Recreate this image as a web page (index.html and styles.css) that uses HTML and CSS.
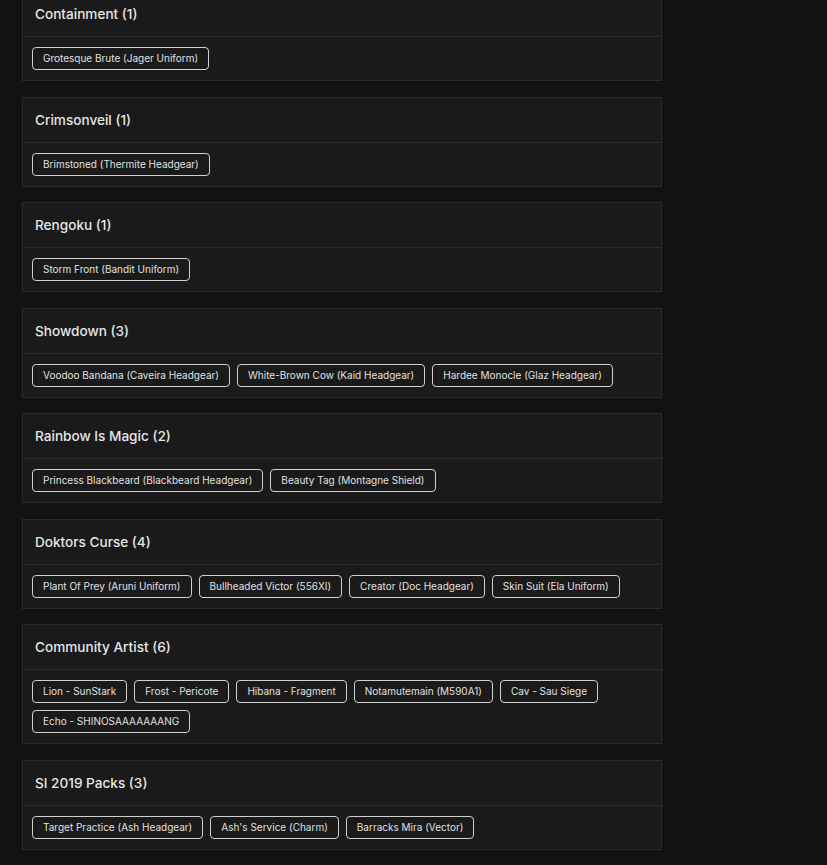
FILE: index.html
```html
<!DOCTYPE html>
<html lang="en">
<head>
  <meta charset="UTF-8">
  <title>Collections</title>
  <meta name="viewport" content="width=device-width, initial-scale=1.0">
  <link rel="stylesheet" href="styles.css">
</head>
<body>

  <main class="collections">

    <section class="pack">
      <h3 class="pack-title">Containment (1)</h3>
      <div class="pack-items">
        <span class="item">Grotesque Brute (Jager Uniform)</span>
      </div>
    </section>

    <section class="pack">
      <h3 class="pack-title">Crimsonveil (1)</h3>
      <div class="pack-items">
        <span class="item">Brimstoned (Thermite Headgear)</span>
      </div>
    </section>

    <section class="pack">
      <h3 class="pack-title">Rengoku (1)</h3>
      <div class="pack-items">
        <span class="item">Storm Front (Bandit Uniform)</span>
      </div>
    </section>

    <section class="pack">
      <h3 class="pack-title">Showdown (3)</h3>
      <div class="pack-items">
        <span class="item">Voodoo Bandana (Caveira Headgear)</span>
        <span class="item">White-Brown Cow (Kaid Headgear)</span>
        <span class="item">Hardee Monocle (Glaz Headgear)</span>
      </div>
    </section>

    <section class="pack">
      <h3 class="pack-title">Rainbow Is Magic (2)</h3>
      <div class="pack-items">
        <span class="item">Princess Blackbeard (Blackbeard Headgear)</span>
        <span class="item">Beauty Tag (Montagne Shield)</span>
      </div>
    </section>

    <section class="pack">
      <h3 class="pack-title">Doktors Curse (4)</h3>
      <div class="pack-items">
        <span class="item">Plant Of Prey (Aruni Uniform)</span>
        <span class="item">Bullheaded Victor (556XI)</span>
        <span class="item">Creator (Doc Headgear)</span>
        <span class="item">Skin Suit (Ela Uniform)</span>
      </div>
    </section>

    <section class="pack">
      <h3 class="pack-title">Community Artist (6)</h3>
      <div class="pack-items">
        <span class="item">Lion - SunStark</span>
        <span class="item">Frost - Pericote</span>
        <span class="item">Hibana - Fragment</span>
        <span class="item">Notamutemain (M590A1)</span>
        <span class="item">Cav - Sau Siege</span>
        <span class="item">Echo - SHINOSAAAAAAANG</span>
      </div>
    </section>

    <section class="pack">
      <h3 class="pack-title">SI 2019 Packs (3)</h3>
      <div class="pack-items">
        <span class="item">Target Practice (Ash Headgear)</span>
        <span class="item">Ash's Service (Charm)</span>
        <span class="item">Barracks Mira (Vector)</span>
      </div>
    </section>

  </main>

</body>
</html>
```

FILE: styles.css
```css
* { box-sizing: border-box; margin: 0; padding: 0; }

body {
  background: #121212;
  color: #e2e2e2;
  font-family: Inter, "Noto Sans", sans-serif;
}

/* list starts scrolled a little past the first card's top */
.collections {
  width: 662px;
  padding-left: 22px;
  margin-top: -9px;
  display: flex;
  flex-direction: column;
  gap: 15.5px;
}

.pack {
  background: #1a1a1a;
  border: 1px solid #2b2b2b;
}

.pack-title {
  height: 45px;
  padding: 0 12px;
  display: flex;
  align-items: center;
  font-size: 13.6px;
  font-weight: 500;
  color: #e6e6e6;
  border-bottom: 1px solid #2b2b2b;
}

.pack-items {
  display: flex;
  flex-wrap: wrap;
  gap: 7px;
  padding: 10px 9px 10px 9px;
}

.item {
  display: inline-block;
  height: 23px;
  padding: 3px 10px;
  line-height: 15px;
  font-size: 10px;
  color: #e0e0e0;
  border: 1px solid #d0d0d0;
  border-radius: 4px;
  white-space: nowrap;
}
```
